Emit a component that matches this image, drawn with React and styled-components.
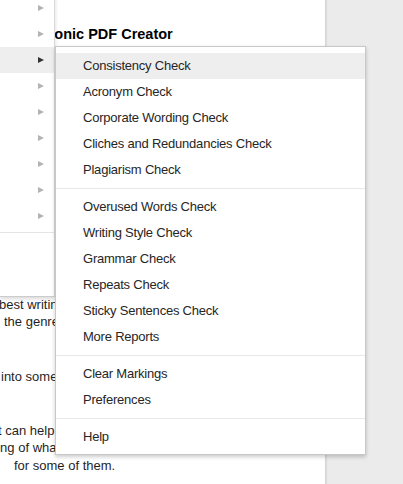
import React from "react";
import styled, { createGlobalStyle } from "styled-components";

const parentRows = 9;
const activeParent = 2;

const groups = [
  [
    "Consistency Check",
    "Acronym Check",
    "Corporate Wording Check",
    "Cliches and Redundancies Check",
    "Plagiarism Check",
  ],
  [
    "Overused Words Check",
    "Writing Style Check",
    "Grammar Check",
    "Repeats Check",
    "Sticky Sentences Check",
    "More Reports",
  ],
  ["Clear Markings", "Preferences"],
  ["Help"],
];

const bodyLines = [
  { text: "best writing", shift: -1, gap: 0 },
  { text: "the genre", shift: 4, gap: 0 },
  { text: "into some", shift: 1, gap: 38 },
  { text: "that can help", shift: -20, gap: 37 },
  { text: "writing of what you may need to pay", shift: -23, gap: 0 },
  { text: "for some of them.", shift: 14, gap: 1 },
];

function App() {
  return (
    <Screen>
      <Global />
      <DocPage>
        <Title>Electronic PDF Creator</Title>
        <Body>
          {bodyLines.map((l, i) => (
            <Line key={i} $shift={l.shift} $gap={l.gap}>
              {l.text}
            </Line>
          ))}
        </Body>

        <ParentMenu>
          {Array.from({ length: parentRows }).map((_, i) => (
            <ParentRow key={i} $active={i === activeParent}>
              <Arrow $active={i === activeParent} />
            </ParentRow>
          ))}
          <ParentSep />
          <ParentRow />
          <ParentRow />
        </ParentMenu>

        <SubMenu>
          {groups.map((items, g) => (
            <React.Fragment key={g}>
              {g > 0 && <Separator />}
              {items.map((label, i) => (
                <Item key={label} $active={g === 0 && i === 0}>
                  {label}
                </Item>
              ))}
            </React.Fragment>
          ))}
        </SubMenu>
      </DocPage>
    </Screen>
  );
}

export default App;

// css
const Global = createGlobalStyle`
  html, body {
    margin: 0;
    padding: 0;
    background: #ebebeb;
    overflow: hidden;
  }
`;

const Screen = styled.div`
  width: 403px;
  height: 484px;
  display: flex;
  background: #ebebeb;
  font-family: "Liberation Sans", Arial, sans-serif;
  overflow: hidden;
`;

const DocPage = styled.div`
  position: relative;
  width: 325px;
  height: 484px;
  background: #fff;
  border-right: 1px solid #d6d6d6;
  box-shadow: 1px 0 1px rgba(0, 0, 0, 0.06);
`;

const Title = styled.div`
  padding-top: 25px;
  margin-left: 14px;
  font-size: 14.5px;
  line-height: 18px;
  font-weight: bold;
  color: #000;
  white-space: nowrap;
`;

const Body = styled.div`
  margin-top: 253px;
  overflow: hidden;
  width: 325px;
`;

const Line = styled.div`
  margin-left: ${(p) => p.$shift}px;
  margin-top: ${(p) => p.$gap}px;
  font-size: 13px;
  line-height: 17px;
  color: #1f1f1f;
  white-space: nowrap;
`;

const ParentMenu = styled.div`
  position: absolute;
  left: 0;
  top: -12px;
  width: 54px;
  padding: 6px 0;
  background: #fff;
  border: 1px solid #ccc;
  border-left: none;
  border-right-color: #d9d9d9;
  box-shadow: 0 2px 4px rgba(0, 0, 0, 0.15);
`;

const ParentRow = styled.div`
  height: 26px;
  display: flex;
  align-items: center;
  justify-content: flex-end;
  padding-right: 10px;
  background: ${(p) => (p.$active ? "#eeeeee" : "transparent")};
`;

const Arrow = styled.span`
  width: 0;
  height: 0;
  border-top: 3.5px solid transparent;
  border-bottom: 3.5px solid transparent;
  border-left: 6px solid ${(p) => (p.$active ? "#333" : "#b3b3b3")};
`;

const ParentSep = styled.div`
  height: 1px;
  background: #e5e5e5;
  margin: 3px 0 5px;
`;

const SubMenu = styled.div`
  position: absolute;
  left: 55px;
  top: 46px;
  width: 309px;
  padding: 6px 0 4px;
  background: #fff;
  border: 1px solid #c8c8c8;
  box-shadow: 0 2px 4px rgba(0, 0, 0, 0.2);
`;

const Item = styled.div`
  height: 26px;
  line-height: 26px;
  padding-left: 27px;
  font-size: 13px;
  letter-spacing: -0.22px;
  color: #262626;
  white-space: nowrap;
  background: ${(p) => (p.$active ? "#eeeeee" : "transparent")};
`;

const Separator = styled.div`
  height: 1px;
  background: #e8e8e8;
  margin: 5px 0;
`;
